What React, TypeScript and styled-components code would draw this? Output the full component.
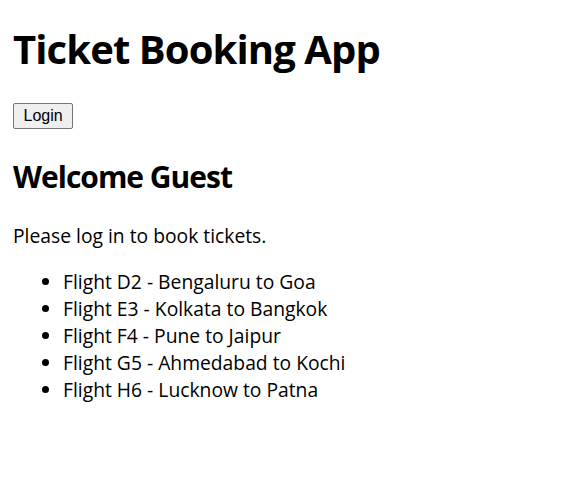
import React from "react";
import styled, { createGlobalStyle } from "styled-components";

const GlobalStyle = createGlobalStyle`
  html, body {
    margin: 0;
    padding: 0;
    background: #ffffff;
  }
  body {
    font-family: "Open Sans", "Noto Sans", sans-serif;
    color: #000000;
  }
`;

const flights = [
  "Flight D2 - Bengaluru to Goa",
  "Flight E3 - Kolkata to Bangkok",
  "Flight F4 - Pune to Jaipur",
  "Flight G5 - Ahmedabad to Kochi",
  "Flight H6 - Lucknow to Patna",
];

function App() {
  const user = null as string | null;

  return (
    <Page>
      <GlobalStyle />
      <Title>Ticket Booking App</Title>

      <LoginButton type="button">Login</LoginButton>

      <Greeting>Welcome {user ?? "Guest"}</Greeting>

      {!user && <Message>Please log in to book tickets.</Message>}

      <FlightList>
        {flights.map((flight) => (
          <FlightItem key={flight}>{flight}</FlightItem>
        ))}
      </FlightList>
    </Page>
  );
}
export default App;

const Page = styled.div`
  display: flex;
  flex-direction: column;
  align-items: flex-start;
  padding: 22px 13px 0;
`;

const Title = styled.h1`
  margin: 0;
  font-size: 40px;
  line-height: 53px;
  font-weight: 700;
  letter-spacing: -0.9px;
`;

const LoginButton = styled.button`
  margin-top: 28px;
  height: 26px;
  padding: 0 9.5px;
  font-family: "Liberation Sans", Arial, sans-serif;
  font-size: 16px;
  line-height: 24px;
  color: #000000;
  background-color: #efefef;
  border: 1px solid #767676;
  border-radius: 2px;
  cursor: pointer;
`;

const Greeting = styled.h2`
  margin: 28px 0 0;
  font-size: 30px;
  line-height: 40px;
  font-weight: 700;
  letter-spacing: -1px;
`;

const Message = styled.p`
  margin: 25px 0 0;
  font-size: 19.3px;
  line-height: 27px;
`;

const FlightList = styled.ul`
  margin: 19px 0 0;
  padding-left: 50px;
  font-size: 19.3px;
  line-height: 27px;
`;

const FlightItem = styled.li`
  list-style: disc;
`;
